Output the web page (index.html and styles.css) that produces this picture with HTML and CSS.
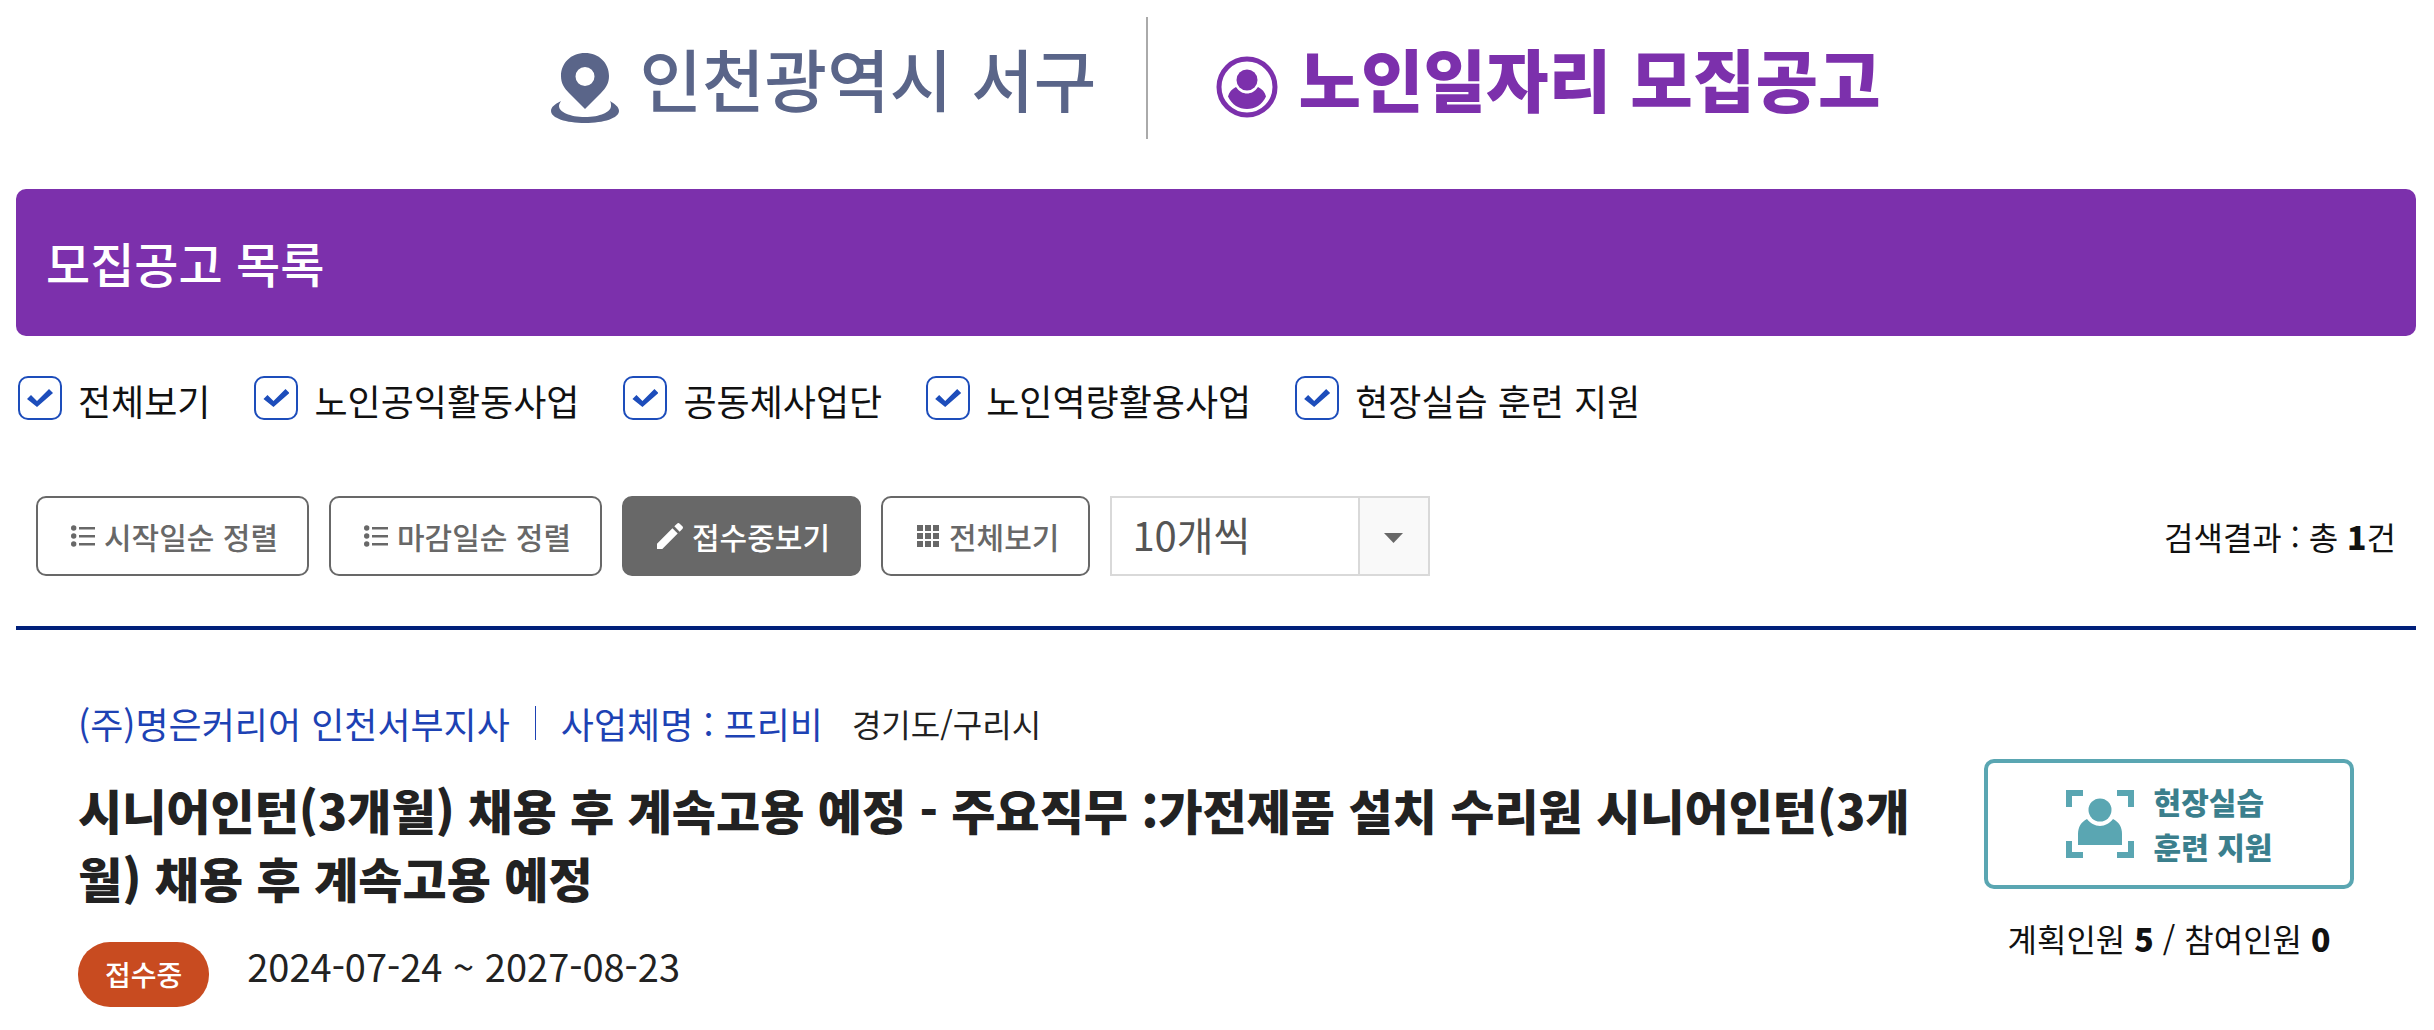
FILE: index.html
```html
<!DOCTYPE html>
<html lang="ko">
<head>
    <meta charset="UTF-8">
    <meta name="viewport" content="width=device-width, initial-scale=1.0">
    <title>노인일자리 모집공고</title>
    <link rel="stylesheet" href="styles.css">
</head>
<body>
    <header class="page-header">
        <div class="region">
            <svg class="region-icon" viewBox="0 0 68 70" aria-hidden="true">
                <path fill-rule="evenodd" d="M34 0C20 0 10 10 10 23c0 7 3 12 8 17l16 16 16-16c5-5 8-10 8-17C58 10 48 0 34 0zm0 14a9.500 9.500 0 0 1 0 19 9.500 9.500 0 0 1 0-19z"/>
                <path d="M10 48C4 51 0 54 0 58c0 7 15 12 34 12s34-5 34-12c0-4-4-7-9-10 1 2 1 3 1 5 0 6-11 11-26 11S8 59 8 53c0-2 1-3 2-5z"/>
            </svg>
            <span>인천광역시 서구</span>
        </div>
        <h1 class="page-title">
            <svg class="title-icon" viewBox="0 0 62 62" aria-hidden="true">
                <circle class="ring" cx="31" cy="31" r="28"/>
                <circle cx="31" cy="24" r="10.500"/>
                <path d="M20 31c-4 2-7 5-8 9.500C16 49 23 53 31 53s15-4 19-12.500C49 36 46 33 42 31c-3 4.500-7 6.500-11 6.500S23 35.500 20 31z"/>
            </svg>
            <span>노인일자리 모집공고</span>
        </h1>
    </header>

    <main>
        <h2 class="banner">모집공고 목록</h2>

        <form class="filters">
            <label><input type="checkbox" checked> 전체보기</label>
            <label><input type="checkbox" checked> 노인공익활동사업</label>
            <label><input type="checkbox" checked> 공동체사업단</label>
            <label><input type="checkbox" checked> 노인역량활용사업</label>
            <label><input type="checkbox" checked> 현장실습 훈련 지원</label>
        </form>

        <div class="toolbar">
            <button type="button" class="btn">
                <svg viewBox="0 0 24 24" aria-hidden="true"><circle cx="2.700" cy="4" r="2.700"/><circle cx="2.700" cy="12" r="2.700"/><circle cx="2.700" cy="20" r="2.700"/><path d="M8 3h16v2.500H8zM8 11h16v2.500H8zM8 19h16v2.500H8z"/></svg>
                시작일순 정렬
            </button>
            <button type="button" class="btn">
                <svg viewBox="0 0 24 24" aria-hidden="true"><circle cx="2.700" cy="4" r="2.700"/><circle cx="2.700" cy="12" r="2.700"/><circle cx="2.700" cy="20" r="2.700"/><path d="M8 3h16v2.500H8zM8 11h16v2.500H8zM8 19h16v2.500H8z"/></svg>
                마감일순 정렬
            </button>
            <button type="button" class="btn active">
                <svg viewBox="0 0 27 27" aria-hidden="true"><path d="M0 21.500V27h5.500L21.500 11 16 5.500zM26.300 6.200c.9-.9.9-2 0-2.800L23.600.7c-.9-.9-2-.9-2.800 0L18 3.500 23.500 9z"/></svg>
                접수중보기
            </button>
            <button type="button" class="btn">
                <svg viewBox="0 0 24 24" aria-hidden="true"><path d="M1 1h6v6H1zM9 1h6v6H9zM17 1h6v6h-6zM1 9h6v6H1zM9 9h6v6H9zM17 9h6v6h-6zM1 17h6v6H1zM9 17h6v6H9zM17 17h6v6h-6z"/></svg>
                전체보기
            </button>
            <select class="page-size" aria-label="목록 개수">
                <option>10개씩</option>
                <option>20개씩</option>
                <option>30개씩</option>
            </select>
            <p class="result">검색결과 : 총 <strong>1</strong>건</p>
        </div>

        <ul class="job-list">
            <li class="job">
                <div class="job-info">
                    <p class="job-org">
                        <span class="org">(주)명은커리어 인천서부지사</span>
                        <span class="company">사업체명 : 프리비</span>
                        <span class="area">경기도/구리시</span>
                    </p>
                    <h3 class="job-title">시니어인턴(3개월) 채용 후 계속고용 예정 - 주요직무 :가전제품 설치 수리원 시니어인턴(3개월) 채용 후 계속고용 예정</h3>
                    <p class="job-period">
                        <span class="status">접수중</span>
                        <span class="date">2024-07-24 ~ 2027-08-23</span>
                    </p>
                </div>
                <div class="job-side">
                    <div class="job-type">
                        <svg viewBox="0 0 68 68" aria-hidden="true">
                            <path class="frame" d="M3 17V3h14M51 3h14v14M65 51v14H51M17 65H3V51"/>
                            <circle cx="34" cy="20" r="11.500"/>
                            <path d="M21 29c-6 3-9 8-9 15v11h44V44c0-7-3-12-9-15-3 4-8 7-13 7s-10-3-13-7z"/>
                        </svg>
                        <span>현장실습<br>훈련 지원</span>
                    </div>
                    <p class="people">계획인원 <strong>5</strong> / 참여인원 <strong>0</strong></p>
                </div>
            </li>
        </ul>
    </main>
</body>
</html>
```
FILE: styles.css
```css
* {
    box-sizing: border-box;
}

body {
    margin: 0;
    padding: 17px 18px 0 16px;
    background: #fff;
    color: #111;
    font-family: "Noto Sans CJK KR", sans-serif;
    font-size: 32px;
}

h1, h2, h3, p, ul {
    margin: 0;
    padding: 0;
}

button, select, input {
    margin: 0;
    font-family: inherit;
}

strong {
    font-weight: 900;
}

/* 상단 제목 */
.page-header {
    display: flex;
    justify-content: center;
    margin-bottom: 50px;
    font-size: 68px;
    line-height: 122px;
}

.region,
.page-title {
    display: flex;
    gap: 20px;
}

.region {
    padding-right: 50px;
    border-right: 2px solid #aaa;
    color: #5a6589;
    font-weight: 500;
}

.page-title {
    padding-left: 68px;
    color: #7c30ac;
    font-size: 68px;
    font-weight: 900;
}

.region-icon,
.title-icon {
    flex: none;
    margin-top: 36px;
    fill: currentColor;
}

.region-icon {
    width: 68px;
    height: 70px;
}

.title-icon {
    width: 62px;
    height: 62px;
    margin-top: 39px;
}

.ring {
    fill: none;
    stroke: currentColor;
    stroke-width: 5;
}

.banner {
    padding: 0 30px;
    border-radius: 10px;
    background: #7c30ac;
    color: #fff;
    font-size: 48px;
    font-weight: 500;
    line-height: 147px;
}

/* 사업유형 체크박스 */
.filters {
    display: flex;
    flex-wrap: wrap;
    gap: 44px;
    padding: 40px 2px 0;
    font-size: 36px;
    line-height: 48px;
}

.filters label {
    display: flex;
    gap: 16px;
    cursor: pointer;
}

.filters input {
    display: grid;
    place-items: center;
    width: 44px;
    height: 44px;
    border: 2px solid #1d4dbb;
    border-radius: 10px;
    background: #fff;
    appearance: none;
}

.filters input:checked::before {
    content: "";
    width: 26px;
    height: 18px;
    background: #1d4dbb;
    clip-path: polygon(0 10px, 4px 6px, 10px 12px, 22px 0, 26px 4px, 10px 18px);
}

/* 정렬 버튼 */
.toolbar {
    display: flex;
    align-items: center;
    gap: 20px;
    padding: 72px 20px 50px;
    border-bottom: 4px solid #001f7a;
}

.btn {
    display: flex;
    align-items: center;
    gap: 9px;
    height: 80px;
    padding: 0 29px 0 33px;
    border: 2px solid #686868;
    border-radius: 10px;
    background: #fff;
    color: #686868;
    font-size: 30px;
    font-weight: 500;
    cursor: pointer;
}

.btn svg {
    width: 24px;
    height: 24px;
    fill: currentColor;
}

.btn.active {
    background: #686868;
    color: #fff;
}

.btn.active svg {
    width: 26px;
    height: 26px;
}

.page-size {
    width: 320px;
    height: 80px;
    padding: 0 90px 4px 20px;
    border: 2px solid #d9d9d9;
    border-radius: 0;
    background: #fff url("data:image/svg+xml,%3Csvg xmlns='http://www.w3.org/2000/svg' width='70' height='76'%3E%3Cpath fill='%23f9f9f9' d='M0 0h70v76H0z'/%3E%3Cpath fill='%23d9d9d9' d='M0 0h2v76H0z'/%3E%3Cpath fill='%23686868' d='M26 35h19l-9.500 10z'/%3E%3C/svg%3E") no-repeat right center;
    color: #555;
    font-size: 40px;
    appearance: none;
}

.result {
    margin-left: auto;
}

/* 공고 목록 */
.job-list {
    list-style: none;
}

.job {
    display: grid;
    grid-template-columns: 1fr 370px;
    align-items: center;
    gap: 60px;
    padding: 67px 62px 20px;
}

.job-org {
    display: flex;
    align-items: center;
    color: #1d42b4;
    font-size: 36px;
    line-height: 52px;
}

.company {
    display: flex;
    align-items: center;
}

.company::before {
    content: "";
    width: 1px;
    height: 34px;
    margin: 0 25px;
    background: #1d42b4;
}

.area {
    margin-left: 29px;
    color: #222;
    font-size: 32px;
}

.job-title {
    margin-top: 26px;
    color: #222;
    font-size: 48px;
    font-weight: 900;
    line-height: 68px;
}

.job-period {
    display: flex;
    align-items: flex-start;
    gap: 38px;
    margin-top: 31px;
    color: #222;
}

.status {
    padding: 6px 27px 7px;
    border-radius: 32px;
    background: #c84b20;
    color: #fff;
    font-size: 28px;
    font-weight: 500;
    line-height: 52px;
}

.date {
    font-size: 38px;
    line-height: 48px;
}

.job-side {
    padding-top: 16px;
    text-align: center;
}

.job-type {
    display: flex;
    align-items: center;
    justify-content: center;
    gap: 20px;
    height: 130px;
    border: 4px solid #5aa6b2;
    border-radius: 10px;
    color: #3b7f8d;
    font-size: 30px;
    font-weight: 900;
    line-height: 45px;
    text-align: left;
}

.job-type svg {
    width: 68px;
    height: 68px;
    fill: #5aa6b2;
}

.frame {
    fill: none;
    stroke: #5aa6b2;
    stroke-width: 6;
}

.people {
    margin-top: 26px;
}
```
